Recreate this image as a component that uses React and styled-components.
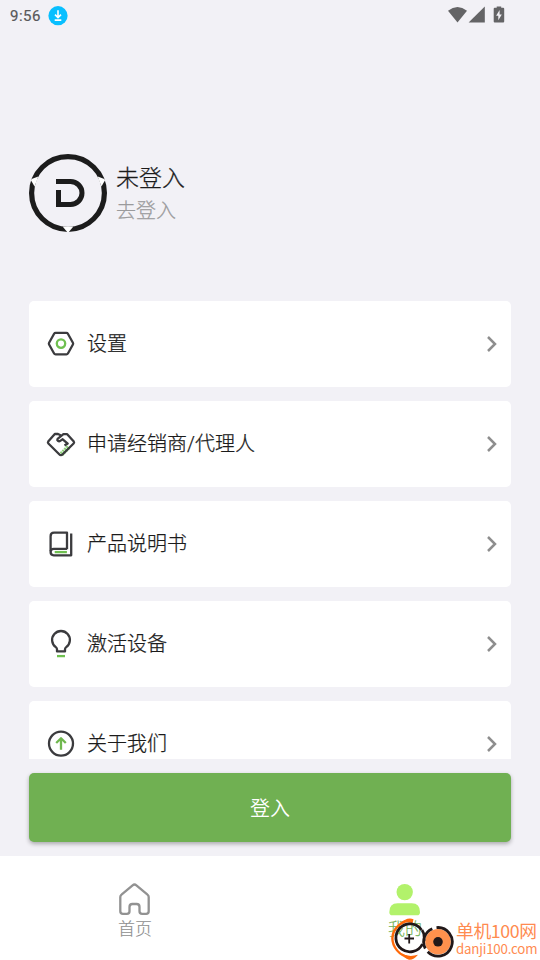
import React from 'react'
import styled, { createGlobalStyle } from 'styled-components'

const GlobalStyle = createGlobalStyle`
  * {
    box-sizing: border-box;
  }
  body {
    margin: 0;
    background: #f2f1f6;
    font-family: 'Roboto', 'Noto Sans CJK SC', sans-serif;
  }
`

const menu = [
  { label: '设置', icon: 'settings' },
  { label: '申请经销商/代理人', icon: 'handshake' },
  { label: '产品说明书', icon: 'manual' },
  { label: '激活设备', icon: 'bulb' },
  { label: '关于我们', icon: 'about' }
]

const icons = {
  settings: (
    <>
      <path d='M9.6 3.8h10.8q1 0 1.5.9l5 9q.5.9 0 1.8l-5 9q-.5.9-1.5.9H9.6q-1 0-1.5-.9l-5-9q-.5-.9 0-1.8l5-9q.5-.9 1.5-.9z' />
      <circle cx='15' cy='14.6' r='4.2' stroke='#6fc050' />
    </>
  ),
  handshake: (
    <>
      <path d='M15.4 25.2l7.2-7.2' stroke='#8fd07c' strokeWidth='4.8' strokeDasharray='2 .7' strokeLinecap='butt' />
      <path d='M14.6 6.2L12 5H8.8L2.2 12.6q-.7 1 .2 1.9l10.8 10.8q1.7 1.8 3.5 0l10.9-10.8q.9-.9.2-1.9L21.2 5.2h-3.8l-5.8 4.6q-.8 1.2.3 2 1.2.9 2.3.1l2.5-1.6 5 4.3-3.2 2' />
    </>
  ),
  manual: (
    <>
      <path d='M21 20.2V3.7H8Q4.6 3.7 4.6 7.2v15' />
      <path d='M25.2 4.6v21.7H7.7q-3.1 0-3.1-3.2t3.1-3.2H21' />
      <path d='M8.7 23.1h12.2' stroke='#6fc050' />
    </>
  ),
  bulb: (
    <>
      <path d='M11 22.4v-2.2q0-1.2-1.2-2.1a8.9 8.9 0 1 1 10.4 0q-1.2.9-1.2 2.1v2.2z' />
      <path d='M11 27.1h8' stroke='#6fc050' strokeLinecap='butt' />
    </>
  ),
  about: (
    <>
      <circle cx='15' cy='14.6' r='12' />
      <path d='M15 20.8V9.6M10.2 14L15 9.2l4.8 4.8' stroke='#70b84f' />
    </>
  )
}

const MenuItem = ({ label, icon }) => (
  <Card>
    <MenuIcon viewBox='0 0 30 30'>{icons[icon]}</MenuIcon>
    <Label>{label}</Label>
    <Chevron viewBox='0 0 12 18'>
      <path d='M2 2l7 7-7 7' />
    </Chevron>
  </Card>
)

const StatusBar = () => (
  <StatusRow>
    <Clock>9:56</Clock>
    <svg width='20' height='20' viewBox='0 0 20 20'>
      <circle cx='10' cy='9.7' r='9.6' fill='#08bfff' />
      <path d='M10 4.2v7m-3-2.6l3 3 3-3M6.7 14.1h6.6' fill='none' stroke='#fff' strokeWidth='1.6' />
    </svg>
    <StatusIcons width='60' height='20' viewBox='0 0 60 20'>
      <path d='M0 4.7Q9.5-2.7 19 4.7L9.5 16.5z' />
      <path d='M36.8.5v16H20.6z' />
      <path d='M46.7 1.8h2V.5h4.5v1.3h2q1 0 1 1v12.6q0 1-1 1h-8.5q-1 0-1-1V2.8q0-1 1-1z' />
      <path d='M51.6 4l-3.5 5.8h2.2v4.4l3.5-5.8h-2.2z' fill='#f2f1f6' />
    </StatusIcons>
  </StatusRow>
)

const notch = 'M33.6 72.6h10.8L39.8 78h-1.6z'

const Avatar = () => (
  <svg width='78' height='78' viewBox='0 0 78 78'>
    <circle cx='39' cy='39' r='36.4' fill='none' stroke='#1c1c1c' strokeWidth='5.2' />
    <path d={notch} fill='#fff' />
    <path d={notch} fill='#fff' transform='rotate(110 39 39)' />
    <path d={notch} fill='#fff' transform='rotate(-110 39 39)' />
    <path d='M27 27.5h14.5a11.5 11.5 0 0 1 0 23H29.5V36' fill='none' stroke='#1c1c1c' strokeWidth='5' />
  </svg>
)

const Watermark = () => (
  <WatermarkBox>
    <svg width='64' height='44' viewBox='0 0 64 44' fill='none'>
      <path d='M20 4.5Q15 4.5 10.5 8C2.5 13.5 0 23 5 31.5q4 7 12 9.5' stroke='#ff6a0a' strokeWidth='2.4' />
      <path d='M9.5 8Q17 .5 23.5 3.2L22.5 7.4Q16 4.8 9.5 8zM11 37q7 4.8 17 1.8-4.4 5.4-9 5-5-1.6-8-6.8z' fill='#ff6a0a' />
      <path d='M31.5 14a14 14 0 1 0 1 14' stroke='#211819' strokeWidth='2.8' />
      <path d='M14.5 22.5h9.5M19.2 18v9.5' stroke='#211819' strokeWidth='1.8' />
      <circle cx='48' cy='25.8' r='12.8' fill='#ff914d' />
      <path d='M46.5 11.6a14.3 14.3 0 1 1-8.8 24.2M35.3 32.5a14.3 14.3 0 0 1 7-19.8M32 14q3 4 2 11' stroke='#211819' strokeWidth='2.8' />
      <circle cx='48' cy='25.8' r='4.8' fill='#211819' />
    </svg>
    <WatermarkText>
      <WatermarkName>单机100网</WatermarkName>
      <WatermarkUrl>danji100.com</WatermarkUrl>
    </WatermarkText>
  </WatermarkBox>
)

const App = () => {
  return (
    <Screen>
      <GlobalStyle />
      <StatusBar />
      <Profile>
        <Avatar />
        <ProfileText>
          <UserName>未登入</UserName>
          <UserHint>去登入</UserHint>
        </ProfileText>
      </Profile>
      <MenuList>
        {menu.map(item => <MenuItem key={item.icon} {...item} />)}
      </MenuList>
      <LoginButton>登入</LoginButton>
      <TabBar>
        <Tab $color='#8e8e8e'>
          <TabIcon viewBox='0 0 34 34'>
            <path d='M2.3 14q0-1.5 1.2-2.4L14.6 2.3q1.9-1.5 3.8 0l11.1 9.3q1.2.9 1.2 2.4v14.2q0 2.6-2.6 2.6h-4q-2.6 0-2.6-2.6v-4.3q0-2.9-2.9-2.9h-4.2q-2.9 0-2.9 2.9v4.3q0 2.6-2.6 2.6h-4q-2.6 0-2.6-2.6z' fill='none' stroke='#929292' strokeWidth='2.3' />
          </TabIcon>
          <span>首页</span>
        </Tab>
        <Tab $color='#70b052'>
          <TabIcon viewBox='0 0 34 34' fill='#b2f26b'>
            <circle cx='16.7' cy='9.1' r='8.2' />
            <path d='M1.3 29.2q0-8.9 8.3-8.9h14.2q8.2 0 8.2 8.9 0 3.1-3.1 3.1H4.4q-3.1 0-3.1-3.1z' />
          </TabIcon>
          <span>我的</span>
        </Tab>
      </TabBar>
      <Watermark />
    </Screen>
  )
}

const Screen = styled.div`
  position: relative;
  display: flex;
  flex-direction: column;
  width: 540px;
  height: 960px;
  overflow: hidden;
  background: #f2f1f6;
`

const StatusRow = styled.header`
  display: flex;
  align-items: center;
  height: 32px;
  padding: 0 32px 0 10px;
`

const Clock = styled.span`
  width: 38px;
  color: #58585a;
  font-size: 15px;
  font-weight: 400;
  letter-spacing: 0.5px;
  -webkit-text-stroke: 0.2px;
`

const StatusIcons = styled.svg`
  margin-left: auto;
  fill: #646466;
`

const Profile = styled.section`
  display: flex;
  gap: 9px;
  margin: 122px 29px 69px;
`

const ProfileText = styled.div`
  display: flex;
  flex-direction: column;
  padding-top: 8px;
  font-weight: 300;
  -webkit-text-stroke: 0.25px;
`

const UserName = styled.div`
  color: #1b1b1b;
  font-size: 23px;
  line-height: 34px;
`

const UserHint = styled.div`
  color: #9a9a9c;
  font-size: 20px;
  line-height: 30px;
`

const MenuList = styled.main`
  display: flex;
  flex-direction: column;
  gap: 14px;
  height: 458px;
  margin: 0 29px;
  overflow: hidden;
`

const Card = styled.div`
  display: flex;
  flex: none;
  align-items: center;
  height: 86px;
  padding: 0 13px 0 16.5px;
  border-radius: 5px;
  background: #fff;
`

const MenuIcon = styled.svg`
  width: 30px;
  height: 30px;
  fill: none;
  stroke: #3b3b3e;
  stroke-width: 2.3;
  stroke-linejoin: round;
`

const Label = styled.span`
  flex: 1;
  margin-left: 11.5px;
  padding-bottom: 3px;
  color: #1b1b1b;
  font-size: 20px;
  font-weight: 300;
  -webkit-text-stroke: 0.25px;
`

const Chevron = styled.svg`
  width: 12px;
  height: 18px;
  margin-bottom: 1px;
  fill: none;
  stroke: #8e8e8e;
  stroke-width: 2.5;
`

const LoginButton = styled.button`
  flex: none;
  height: 69px;
  margin: 14px 29px;
  border: 0;
  border-radius: 5px;
  background: #70b052;
  box-shadow: 0 2px 4px rgba(0, 0, 0, 0.3);
  color: #fff;
  font-family: inherit;
  font-size: 20px;
  font-weight: 350;
`

const TabBar = styled.nav`
  display: grid;
  grid-template-columns: 1fr 1fr;
  height: 104px;
  background: #fff;
`

const Tab = styled.div`
  display: flex;
  flex-direction: column;
  align-items: center;
  padding-top: 27px;
  color: ${props => props.$color};
  font-size: 17px;
  font-weight: 300;
  line-height: 25px;
  -webkit-text-stroke: 0.15px;
`

const TabIcon = styled.svg`
  flex: none;
  width: 34px;
  height: 34px;
`

const WatermarkBox = styled.div`
  position: absolute;
  left: 390px;
  bottom: 0;
  display: flex;
`

const WatermarkText = styled.div`
  display: flex;
  flex-direction: column;
  width: 86px;
  margin-left: 2px;
  color: #ff8b50;
  font-family: 'Noto Sans CJK SC', sans-serif;
  white-space: nowrap;
`

const WatermarkName = styled.span`
  font-size: 17.8px;
  line-height: 25px;
  letter-spacing: -0.4px;
  padding-top: 2px;
`

const WatermarkUrl = styled.span`
  font-size: 13.3px;
  line-height: 12px;
  letter-spacing: -0.2px;
`

export default App
